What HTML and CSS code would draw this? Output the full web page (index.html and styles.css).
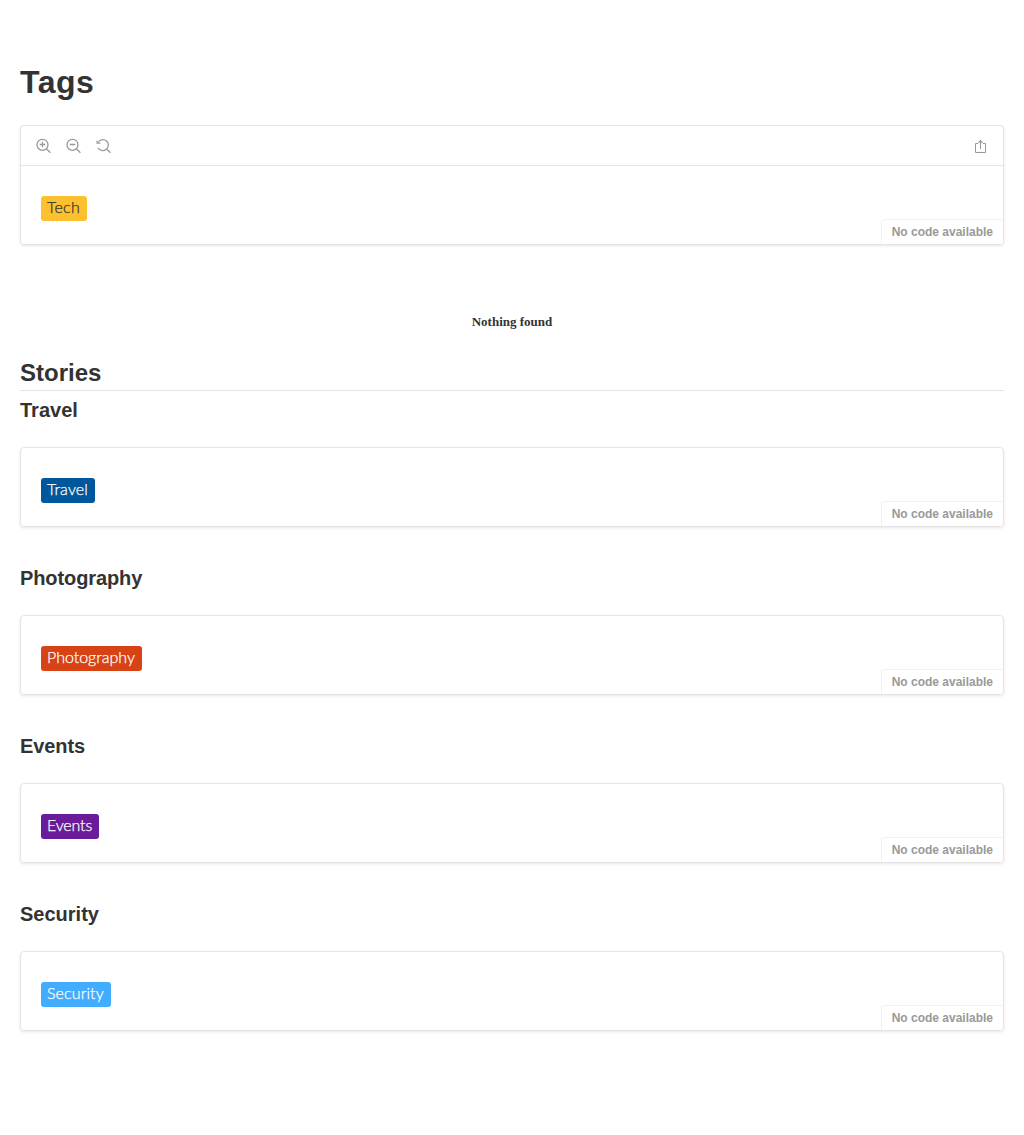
FILE: index.html
```html
<!DOCTYPE html>
<html lang="en">
<head>
<meta charset="utf-8">
<title>Tags</title>
<link rel="stylesheet" href="styles.css">
</head>
<body>
<main class="docs">
<h1 class="title">Tags</h1>
<section class="preview">
<div class="toolbar">
<div class="tools">
<svg class="icon" viewBox="0 0 16 16"><circle cx="6.500" cy="6.800" r="5.500"/><path d="M10.400 10.700L14.400 14.700M3.700 6.500h5.600M6.500 3.700v5.600"/></svg>
<svg class="icon" viewBox="0 0 16 16"><circle cx="6.500" cy="6.800" r="5.500"/><path d="M10.400 10.700L14.400 14.700M3.700 6.500h5.600"/></svg>
<svg class="icon" viewBox="0 0 16 16"><path d="M2.500 3.700a5.500 5.500 0 11-.5 6M10.400 10.700L14.400 14.700"/><path class="head" d="M.5 2v3.700h3.900V4.400H2.500z"/></svg>
</div>
<svg class="icon share" viewBox="0 0 14 14"><path d="M6.500 10V1M4 4.500H1.500v9h10v-9H9"/><path class="head" d="M3.800 3.800L6.500 .8l2.700 3H7.500l-1-1-1 1z"/></svg>
</div>
<div class="canvas"><span class="tag tech">Tech</span><span class="code">No code available</span></div>
</section>
<p class="empty">Nothing found</p>
<h2 class="stories">Stories</h2>
<h3 class="name">Travel</h3>
<section class="preview"><div class="canvas"><span class="tag travel">Travel</span><span class="code">No code available</span></div></section>
<h3 class="name tight">Photography</h3>
<section class="preview"><div class="canvas"><span class="tag photography">Photography</span><span class="code">No code available</span></div></section>
<h3 class="name tight">Events</h3>
<section class="preview"><div class="canvas"><span class="tag events">Events</span><span class="code">No code available</span></div></section>
<h3 class="name">Security</h3>
<section class="preview"><div class="canvas"><span class="tag security">Security</span><span class="code">No code available</span></div></section>
</main>
</body>
</html>
```
FILE: styles.css
```css
* { box-sizing: border-box; }
body { margin: 0; background: #fff; color: #333; font-family: "Liberation Sans", Arial, sans-serif; }
.docs { padding: 64px 20px 104px; }
.title { margin: 0; font-size: 32px; line-height: 36px; letter-spacing: .5px; }
.preview { margin: 25px 0 39px; border: 1px solid rgba(0,0,0,.1); border-radius: 4px; box-shadow: 0 1px 3px rgba(0,0,0,.1); overflow: hidden; }
.toolbar { display: flex; justify-content: space-between; align-items: center; height: 40px; padding: 0 15px; border-bottom: 1px solid rgba(0,0,0,.1); }
.tools { display: flex; gap: 14px; }
.icon { display: block; width: 16px; height: 16px; fill: none; stroke: #999; stroke-width: 1.3; }
.share { width: 14px; height: 14px; stroke-width: 1; }
.head { fill: #999; stroke: none; }
.canvas { position: relative; height: 78px; padding: 30px 20px; }
.tag { display: inline-block; height: 25px; padding: 0 6px; border-radius: 3px; font: 300 16px/22px Lato, sans-serif; -webkit-text-stroke: .25px; color: #fff; vertical-align: top; white-space: nowrap; }
.tech { width: 46px; background: #fdc02f; color: #333; letter-spacing: .25px; }
.travel { width: 54px; background: #01579b; letter-spacing: .15px; }
.photography { width: 101px; background: #d84315; }
.events { width: 58px; background: #6a1b9a; letter-spacing: -.15px; }
.security { width: 70px; background: #42adff; letter-spacing: .12px; }
.code { position: absolute; right: 0; bottom: 0; height: 25px; padding: 4px 10px; border: 1px solid rgba(0,0,0,.05); border-width: 1px 0 0 1px; border-radius: 4px 0 0; background: #fff; color: #999; font-size: 12px; font-weight: 700; line-height: 16px; }
.empty { margin: 69px 0 29px; text-align: center; font: 700 13px/15px "Liberation Serif", serif; }
.stories { margin: 0; height: 33px; border-bottom: 1px solid rgba(0,0,0,.1); font-size: 24px; line-height: 30px; }
.name { margin: 0; font-size: 20px; line-height: 24px; }
.tight { letter-spacing: -.1px; }
.preview + .empty { margin-top: 69px; }
.stories + .name { margin-top: 7px; }
```
